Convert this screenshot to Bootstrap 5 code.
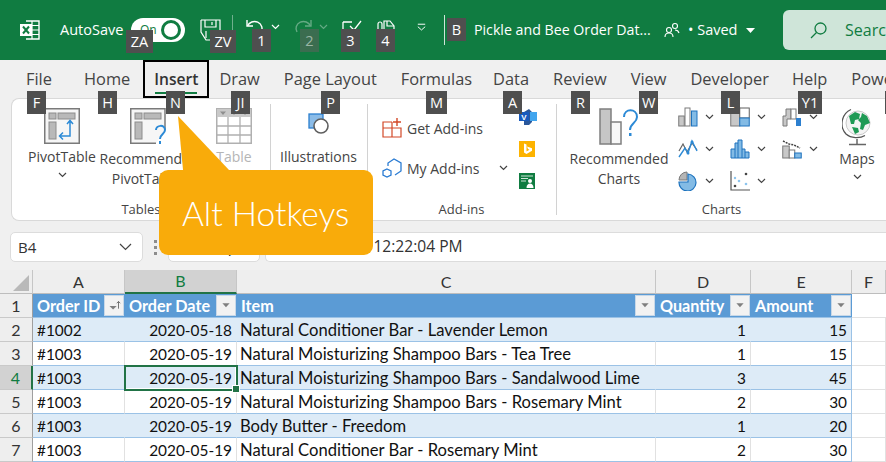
<!DOCTYPE html>
<html lang="en">
<head>
<meta charset="UTF-8">
<title>Pickle and Bee Order Data - Excel</title>
<meta name="viewport" content="width=device-width, initial-scale=1">
<link href="https://cdn.jsdelivr.net/npm/bootstrap@5.3.2/dist/css/bootstrap.min.css" rel="stylesheet">
<style>
    html, body { height: 462px; overflow: hidden; }
    body { background: #f0f0f0; font-family: "Open Sans", "Noto Sans", sans-serif; color: #333; }
    .app-frame { position: relative; width: 886px; height: 462px; overflow: hidden; }

    /* title bar */
    .title-bar { height: 60px; background: #107c41; color: #fff; font-size: 14.5px; white-space: nowrap; overflow: hidden; }
    .title-bar > * { flex: none; }
    .xl-logo { margin-left: 20px; }
    .autosave-label { margin-left: 20px; width: 71px; }
    .toggle-pill { width: 54px; height: 24px; border-radius: 12px; background: #fff; color: #107c41; font-size: 12px; padding-left: 9px; }
    .toggle-knob { width: 20px; height: 20px; border-radius: 50%; border: 3.5px solid #107c41; background: #fff; margin-left: auto; margin-right: 4px; }
    .save-ico { margin-left: 15px; }
    .qa-sep { width: 1px; height: 30px; background: #6fb08d; margin-left: 11px; margin-right: 13px; }
    .qa-sep-2 { margin-left: 18px; margin-right: 29px; background: #cfe5d9; }
    .qa-ico { margin-bottom: 6px; }
    .qa-chev { margin: 0 14px 6px 7px; }
    .redo-ico { opacity: .35; }
    .qa-gap { margin-left: 15px; }
    .qa-more { margin-left: 22px; margin-bottom: 6px; }
    .file-name { width: 190px; font-size: 14.2px; }
    .people-ico { margin-right: 8px; }
    .saved-text { width: 58px; font-size: 14.5px; }
    .search-box { width: 120px; height: 40px; border-radius: 6px; background: #cfe5d9; color: #107c41; margin-left: 28px; padding-left: 27px; font-size: 16px; margin-bottom: 0; }
    .search-box svg { margin-right: 18px; flex: none; }

    /* tabs */
    .tab-row { height: 38px; padding-left: 14px; font-size: 16.4px; white-space: nowrap; }
    .rb-tab { position: relative; height: 38px; padding: 0 12px; line-height: 38px; color: #444; }
    .rb-tab-file { margin-right: 8px; }
    .rb-tab-active { margin: 0 -2px 0 1px; padding: 0 9px; border: 2px solid #000; line-height: 34px; font-weight: 600; font-size: 15.6px; z-index: 2; color: #333; }
    .rb-tab-active::after { content: ""; position: absolute; left: 10px; right: 10px; bottom: 2px; height: 2px; background: #107c41; }
    .rb-tab-snug { margin-right: -3px; }
    .rb-tab-snug-1 { margin-right: -1px; }

    /* ribbon */
    .ribbon-panel { height: 123px; margin-left: 11px; background: #fff; border: 1px solid #d9d9d9; border-right: 0; border-radius: 8px 0 0 8px; font-size: 14px; color: #444; }
    .rb-group { position: relative; height: 100%; flex: none; }
    .rb-group + .rb-group::before { content: ""; position: absolute; left: 0; top: 5px; bottom: 5px; width: 1px; background: #d2d2d2; }
    .rb-tables { width: 258px; padding-left: 15px; }
    .rb-illus { width: 97px; }
    .rb-addins { width: 189px; }
    .rb-charts { width: 331px; }
    .rb-label { position: absolute; left: 0; right: 0; top: 100px; text-align: center; font-size: 13px; line-height: 20px; }
    .rb-big { width: 70px; line-height: 20px; text-align: center; white-space: nowrap; flex: none; }
    .rb-big svg { display: block; margin: 9px auto 3px; }
    .rb-big .rb-caret { margin: 5px auto 0; }
    .rb-rec { width: 104px; margin-right: 0; }
    .rb-table-btn { width: 62px; color: #b5b5b5; margin-left: 2px; }
    .rb-illus .rb-big { width: 100%; padding-top: 5px; }
    .rb-illus .rb-big svg { margin-bottom: 12px; }
    .addin-rows { padding: 19px 0 0 15px; width: 152px; }
    .addin-row { height: 20px; margin-bottom: 20px; white-space: nowrap; gap: 5px; }
    .addin-row .rb-caret { margin-left: 14px; }
    .addin-apps { padding-top: 10px; gap: 16px; }
    .chart-rec { width: 106px; margin-left: 10px; }
    .chart-grid { display: grid; grid-template-columns: repeat(3, 52px); grid-auto-rows: 32px; margin-left: 6px; padding-top: 2px; }
    .chart-cell { gap: 7px; }
    .chart-maps { width: 44px; margin-left: 1px; }

    /* formula row */
    .formula-row { height: 49px; padding: 11px 0 8px 10px; font-size: 15px; }
    .name-box, .fx-box, .formula-box { height: 30px; background: #fff; border: 1px solid #dcdcdc; border-radius: 5px; }
    .name-box { width: 133px; padding: 0 10px 0 7px; }
    .drag-dots { width: 25px; gap: 3px; }
    .drag-dots i { width: 3px; height: 3px; background: #8c8c8c; display: block; }
    .fx-box { width: 92px; margin-right: 5px; padding-right: 18px; font-family: "Liberation Serif", serif; font-style: italic; font-size: 17px; }
    .formula-box { flex: 1; border-radius: 5px 0 0 5px; border-right: 0; padding-left: 22px; color: #333; white-space: nowrap; font-size: 15.6px; }

    /* sheet */
    .xl-sheet { table-layout: fixed; width: 886px; margin: 0; border-collapse: separate; border-spacing: 0; font-family: Lato, "Liberation Sans", sans-serif; font-size: 15.4px; color: #111; }
    .table.xl-sheet > * > tr > * { padding: 0 4px; height: 24px; line-height: 22px; border: 0; border-right: 1px solid #e1e1e1; border-bottom: 1px solid #e1e1e1; background: #fff; color: #111; box-shadow: none; white-space: nowrap; vertical-align: middle; overflow: visible; font-weight: 400; }
    .table.xl-sheet > thead > tr > th { height: 23px; background: #eeeeee; text-align: center; color: #333; border-right-color: #c6c6c6; border-bottom-color: #bdbdbd; font-size: 16px; position: relative; }
    .table.xl-sheet > thead > tr > th.col-on { background: #d2d2d2; color: #107c41; border-bottom: 2px solid #217346; }
    .table.xl-sheet > thead > tr > th.col-corner { padding: 0; }
    .col-corner svg { position: absolute; right: 3px; bottom: 2px; }
    .table.xl-sheet > tbody > tr > th { background: #eeeeee; color: #333; text-align: center; font-size: 16px; border-right-color: #9f9f9f; border-bottom-color: #c9c9c9; padding: 0; }
    .table.xl-sheet > tbody > tr > th.row-on { background: #d2d2d2; color: #107c41; border-right: 2px solid #217346; }
    .table.xl-sheet > tbody > tr.head-row > td { background: #5b9bd5; color: #fff; font-weight: 700; font-size: 16.2px; border-right: 0; border-bottom-color: #9bc2e6; padding-right: 1px; }
    .table.xl-sheet > tbody > tr.band-row > td { background: #ddebf7; border-right-color: #ddebf7; border-bottom-color: #9bc2e6; }
    .table.xl-sheet > tbody > tr.plain-row > td { border-bottom-color: #9bc2e6; }
    .table.xl-sheet > tbody > tr > td.tbl-end { border-right-color: #9bc2e6; }
    .table.xl-sheet > tbody > tr > td.item-cell { font-size: 16.6px; padding-left: 3px; }
    .table.xl-sheet > tbody > tr > td.off-tbl { background: #fff; border-bottom-color: #e1e1e1; border-right-color: #e1e1e1; font-weight: 400; }
    .table.xl-sheet > tbody > tr > td.cell-on { position: relative; outline: 2px solid #217346; outline-offset: -1px; box-shadow: inset 0 0 0 1px #fff; z-index: 1; }
    .cell-on::after { content: ""; position: absolute; right: -4px; bottom: -4px; width: 6px; height: 6px; background: #217346; border: 1px solid #fff; box-sizing: content-box; }
    .filter-btn { width: 20px; height: 21px; background: #f2f2f2; border: 1px solid #c8d8e8; flex: none; }
    .num-cell { text-align: right; }

    /* alt hotkeys */
    .hk { position: absolute; height: 23px; min-width: 19px; padding: 0 3px; background: #4f4f4f; color: #fff; font-size: 14.5px; line-height: 23px; text-align: center; z-index: 5; }
    .hk-za { left: 126px; top: 30px; width: 27px; }
    .hk-zv { left: 210px; top: 30px; width: 26px; }
    .hk-1 { left: 252px; top: 29px; }
    .hk-2 { left: 300px; top: 29px; background: #3b6d50; color: #9ab6a6; }
    .hk-3 { left: 341px; top: 29px; }
    .hk-4 { left: 376px; top: 29px; }
    .hk-b { left: 447px; top: 18px; }
    .hk-f { left: 27px; top: 91px; }
    .hk-h { left: 98px; top: 91px; }
    .hk-n { left: 166px; top: 91px; }
    .hk-ji { left: 231px; top: 91px; }
    .hk-p { left: 321px; top: 91px; }
    .hk-m { left: 426px; top: 91px; width: 21px; }
    .hk-a { left: 503px; top: 91px; }
    .hk-r { left: 571px; top: 91px; }
    .hk-w { left: 639px; top: 91px; }
    .hk-l { left: 721px; top: 91px; }
    .hk-y1 { left: 798px; top: 91px; width: 24px; }
    .hk-end { left: 885px; top: 91px; }

    .callout-tip { position: absolute; left: 170px; top: 112px; z-index: 6; }
    .callout-body { position: absolute; left: 159px; top: 170px; width: 214px; height: 85px; padding-left: 23px; border-radius: 9px; background: #f9ab0a; color: #fff; font-family: Lato, sans-serif; font-weight: 300; font-size: 33.5px; line-height: 87px; z-index: 6; white-space: nowrap; }
</style>
</head>
<body>
<svg class="d-none" xmlns="http://www.w3.org/2000/svg">
    <symbol id="caret" viewBox="0 0 9 6"><path d="M1 1l3.5 3.5L8 1" fill="none" stroke="#444" stroke-width="1.2"/></symbol>
    <symbol id="caret-w" viewBox="0 0 9 6"><path d="M1 1l3.5 3.5L8 1" fill="none" stroke="#fff" stroke-width="1.2"/></symbol>
    <symbol id="filter" viewBox="0 0 20 21"><path d="M6 8h8l-4 4.5z" fill="#7f7f7f"/></symbol>
</svg>
<div class="app-frame">

    <!-- title bar -->
    <div class="title-bar d-flex align-items-center">
        <svg class="xl-logo" width="20" height="20" viewBox="0 0 20 20">
            <path d="M6 1h13v18H6" fill="none" stroke="#fff" stroke-width="1.4"/>
            <path d="M12 1v18M12 5.5h7M12 10h7M12 14.5h7" stroke="#fff" stroke-width="1.2"/>
            <rect x="0" y="4" width="12" height="12" fill="#fff"/>
            <path d="M3 6.5l6 7M9 6.5l-6 7" stroke="#107c41" stroke-width="2"/>
        </svg>
        <span class="autosave-label">AutoSave</span>
        <div class="toggle-pill d-flex align-items-center"><span>On</span><span class="toggle-knob"></span></div>
        <svg class="save-ico" width="21" height="24" viewBox="0 0 21 24" fill="none" stroke="#fff" stroke-width="1.2">
            <path d="M1 2h19v11M1 2v12l5 8h5"/><path d="M5 2v7h11V2M12 4v3"/><path d="M6 13v7"/>
        </svg>
        <span class="qa-sep"></span>
        <svg class="qa-ico" width="18" height="18" viewBox="0 0 18 18" fill="none" stroke="#fff" stroke-width="1.4"><path d="M1 2v6h6"/><path d="M1.5 8A7.5 7 0 1 1 15 14"/></svg>
        <svg class="qa-chev" width="9" height="6"><use href="#caret-w"/></svg>
        <svg class="qa-ico redo-ico" width="18" height="18" viewBox="0 0 18 18" fill="none" stroke="#fff" stroke-width="1.4"><path d="M17 2v6h-6"/><path d="M16.5 8A7.5 7 0 1 0 3 14"/></svg>
        <svg class="qa-chev redo-ico" width="9" height="6"><use href="#caret-w"/></svg>
        <svg class="qa-ico" width="20" height="14" viewBox="0 0 20 14" fill="none" stroke="#fff" stroke-width="1.3"><path d="M1 2h9M1 2v11h13V9"/><path d="M8 6l4 4 7-9"/></svg>
        <svg class="qa-ico qa-gap" width="18" height="16" viewBox="0 0 18 16" fill="none" stroke="#fff" stroke-width="1.2"><rect x="1" y="3" width="4" height="11" rx="2"/><path d="M7 2h6l4 5v7H7z"/><path d="M10 2v5h7"/></svg>
        <svg class="qa-more" width="9" height="9" viewBox="0 0 11 10" fill="none" stroke="#fff" stroke-width="1.2"><path d="M1 1h9"/><path d="M1 4l4.5 4L10 4"/></svg>
        <span class="qa-sep qa-sep-2"></span>
        <span class="file-name">Pickle and Bee Order Dat...</span>
        <svg class="people-ico" width="16" height="16" viewBox="0 0 16 16" fill="none" stroke="#fff" stroke-width="1.1"><circle cx="11" cy="4" r="2.5"/><circle cx="5" cy="8" r="2.5"/><path d="M1 15c0-3 2-4 4-4s4 1 4 4M11 8c2 0 3.500 1 4 3"/></svg>
        <span class="saved-text">&bull; Saved</span>
        <svg width="9" height="5" viewBox="0 0 9 5"><path d="M0 0h9L4.500 5z" fill="#fff"/></svg>
        <div class="search-box d-flex align-items-center">
            <svg width="17" height="17" viewBox="0 0 17 17" fill="none" stroke="#107c41" stroke-width="1.3"><circle cx="10.500" cy="6.500" r="5.500"/><path d="M6.500 10.500L1 16"/></svg>
            <span>Search</span>
        </div>
    </div>

    <!-- ribbon tabs -->
    <div class="tab-row d-flex">
        <div class="rb-tab rb-tab-file">File</div>
        <div class="rb-tab">Home</div>
        <div class="rb-tab rb-tab-active">Insert</div>
        <div class="rb-tab">Draw</div>
        <div class="rb-tab">Page Layout</div>
        <div class="rb-tab rb-tab-snug">Formulas</div>
        <div class="rb-tab">Data</div>
        <div class="rb-tab">Review</div>
        <div class="rb-tab">View</div>
        <div class="rb-tab rb-tab-snug-1">Developer</div>
        <div class="rb-tab">Help</div>
        <div class="rb-tab">Power Pivot</div>
    </div>

    <!-- ribbon -->
    <div class="ribbon-panel d-flex overflow-hidden">
        <div class="rb-group rb-tables d-flex">
            <div class="rb-big">
                <svg width="36" height="36" viewBox="0 0 36 36">
                    <rect x=".75" y=".75" width="34.500" height="34.500" fill="#f6f6f6" stroke="#7a7a7a" stroke-width="1.500"/>
                    <rect x="5" y="5" width="7" height="6" fill="#b9b9b9" stroke="#8c8c8c"/><rect x="14" y="5" width="17" height="6" fill="#b9b9b9" stroke="#8c8c8c"/><rect x="5" y="14" width="7" height="17" fill="#b9b9b9" stroke="#8c8c8c"/>
                    <path d="M26 13v15H16M23 16l3-3.500 3 3.500M19 24.500L15.500 28l3.500 3.500" fill="none" stroke="#2c8ad6" stroke-width="1.500"/>
                </svg>
                PivotTable
                <svg class="rb-caret" width="9" height="6"><use href="#caret"/></svg>
            </div>
            <div class="rb-big rb-rec">
                <svg width="38" height="38" viewBox="0 0 38 38">
                    <path d="M35 22V.75H.75v34.500H26" fill="#f6f6f6" stroke="#7a7a7a" stroke-width="1.500"/>
                    <rect x="5" y="5" width="7" height="6" fill="#b9b9b9" stroke="#8c8c8c"/><rect x="14" y="5" width="17" height="6" fill="#b9b9b9" stroke="#8c8c8c"/><rect x="5" y="14" width="7" height="17" fill="#b9b9b9" stroke="#8c8c8c"/>
                    <path d="M26 22c0-5 9-6 9 0 0 4-5 4-5 9" fill="none" stroke="#2c8ad6" stroke-width="2"/><rect x="29" y="33" width="2" height="3" fill="#2c8ad6"/>
                </svg>
                Recommended<br>PivotTables
            </div>
            <div class="rb-big rb-table-btn">
                <svg width="36" height="36" viewBox="0 0 36 36">
                    <rect x=".75" y=".75" width="34.500" height="34.500" fill="#fff" stroke="#b0b0b0" stroke-width="1.500"/>
                    <rect x="1" y="1" width="34" height="8" fill="#c9c9c9"/>
                    <path d="M1 18h34M1 27h34M12 9v26M24 9v26" stroke="#b0b0b0" stroke-width="1.300"/>
                    <path d="M4 3.500h6l-3 3.500zM15 3.500h6l-3 3.500zM26 3.500h6l-3 3.500z" fill="#8f8f8f"/>
                </svg>
                Table
            </div>
            <div class="rb-label">Tables</div>
        </div>
        <div class="rb-group rb-illus">
            <div class="rb-big">
                <svg width="22" height="22" viewBox="0 0 22 22">
                    <rect x="1" y="1" width="14" height="14" fill="#8bbce8" stroke="#2c7fcf" stroke-width="1.300"/>
                    <circle cx="13" cy="13" r="7" fill="#fff" stroke="#5f5f5f" stroke-width="1.600"/>
                </svg>
                Illustrations
            </div>
        </div>
        <div class="rb-group rb-addins d-flex">
            <div class="addin-rows">
                <div class="addin-row d-flex align-items-center">
                    <svg width="20" height="20" viewBox="0 0 20 20" fill="none" stroke="#d24726" stroke-width="1.200"><path d="M10 4H1v15h18v-9H1M10 4v15"/><path d="M15 0v8M11 4h8" stroke-width="1.400"/></svg>
                    <span>Get Add-ins</span>
                </div>
                <div class="addin-row d-flex align-items-center">
                    <svg width="20" height="20" viewBox="0 0 20 20" fill="none" stroke="#2b7cd3" stroke-width="1.300"><path d="M6 8V5l6-4 7 4v8l-6 4"/><path d="M5 11l4 2v4l-4 2-4-2v-4z"/></svg>
                    <span>My Add-ins</span>
                    <svg class="rb-caret" width="9" height="6"><use href="#caret"/></svg>
                </div>
            </div>
            <div class="addin-apps d-flex flex-column">
                <svg width="18" height="16" viewBox="0 0 18 16"><path d="M5 3l5-3 3 3h5v9h-5v1l-3 3H5z" fill="#2b579a"/><path d="M11 3h7v9h-7z" fill="#41a5ee"/><rect x="0" y="3" width="10" height="9" fill="#185abd"/><text x="5" y="10.500" font-size="8" font-weight="700" fill="#fff" text-anchor="middle" font-family="Liberation Sans, sans-serif">V</text></svg>
                <svg width="16" height="16" viewBox="0 0 16 16"><rect width="16" height="16" fill="#fdb300"/><path d="M5 2.500l2.500 1v7l3-1.800-1.500-.8-1-2.500 5 1.800v2.600L7.500 13 5 11.500z" fill="#fff"/></svg>
                <svg width="16" height="16" viewBox="0 0 16 16"><rect width="16" height="16" fill="#107c41"/><path d="M2 3h12M2 5.500h7M2 8h5" stroke="#cfe5d9"/><circle cx="11" cy="8" r="2" fill="#fff"/><path d="M7.500 15c0-3 1.500-4.500 3.500-4.500s3.500 1.500 3.500 4.500z" fill="#fff"/></svg>
            </div>
            <div class="rb-label">Add-ins</div>
        </div>
        <div class="rb-group rb-charts d-flex">
            <div class="rb-big chart-rec">
                <svg width="40" height="38" viewBox="0 0 40 38">
                    <rect x="1" y="1" width="11" height="35" fill="#c6c6c6" stroke="#7f7f7f" stroke-width="1.500"/>
                    <rect x="12" y="14" width="10" height="22" fill="#f7f7f7" stroke="#7f7f7f" stroke-width="1.500"/>
                    <path d="M25 9c0-9 13-9 13 0 0 6-7 6-7 13" fill="none" stroke="#2c8ad6" stroke-width="2"/><rect x="30" y="25" width="2.500" height="3" fill="#2c8ad6"/>
                </svg>
                Recommended<br>Charts
            </div>
            <div class="chart-grid">
                <div class="chart-cell d-flex align-items-center">
                    <svg width="20" height="20" viewBox="0 0 20 20"><rect x=".75" y="9" width="5.500" height="10" fill="#c8c8c8" stroke="#7a7a7a"/><rect x="7" y="1" width="5" height="18" fill="#fff" stroke="#7a7a7a"/><rect x="13.500" y="4" width="5.500" height="15" fill="#83bbe5" stroke="#1e73be"/></svg>
                    <svg width="9" height="6"><use href="#caret"/></svg>
                </div>
                <div class="chart-cell d-flex align-items-center">
                    <svg width="20" height="20" viewBox="0 0 20 20"><rect x=".75" y="1" width="9" height="18" fill="#c8c8c8" stroke="#7a7a7a"/><rect x="9.750" y="1" width="9.500" height="10" fill="#fff" stroke="#5f5f5f"/><rect x="9.750" y="11" width="9.500" height="8" fill="#83bbe5" stroke="#1e73be"/></svg>
                    <svg width="9" height="6"><use href="#caret"/></svg>
                </div>
                <div class="chart-cell d-flex align-items-center">
                    <svg width="20" height="20" viewBox="0 0 20 20"><path d="M1 19V9h3V2h5v10H5v7z" fill="#c8c8c8" stroke="#7a7a7a"/><rect x="9" y="2" width="5" height="10" fill="#fff" stroke="#7a7a7a"/><rect x="14" y="11" width="5" height="8" fill="#2c7fcf"/></svg>
                    <svg width="9" height="6"><use href="#caret"/></svg>
                </div>
                <div class="chart-cell d-flex align-items-center">
                    <svg width="20" height="20" viewBox="0 0 20 20" fill="none"><path d="M1 12l4-7 4 8 5-9 5 7" stroke="#666" stroke-width="1.200"/><path d="M1 18l6-9 3 5 4-12 5 10" stroke="#2c8ad6" stroke-width="1.400"/><circle cx="14" cy="3" r="1.500" fill="#2c8ad6"/><circle cx="10" cy="14" r="1.500" fill="#2c8ad6"/></svg>
                    <svg width="9" height="6"><use href="#caret"/></svg>
                </div>
                <div class="chart-cell d-flex align-items-center">
                    <svg width="20" height="20" viewBox="0 0 20 20"><path d="M1 19V10h4V4h3V1h4v9h3v3h4v6z" fill="#83bbe5" stroke="#1e73be"/><path d="M5 10v9M8 4v15M12 10v9M15 13v6" stroke="#1e73be"/></svg>
                    <svg width="9" height="6"><use href="#caret"/></svg>
                </div>
                <div class="chart-cell d-flex align-items-center">
                    <svg width="20" height="20" viewBox="0 0 20 20"><rect x=".75" y="7" width="6.500" height="12" fill="#c8c8c8" stroke="#7a7a7a"/><rect x="7.250" y="11" width="5.500" height="8" fill="#fff" stroke="#7a7a7a"/><rect x="12.750" y="14" width="6.500" height="5" fill="#83bbe5" stroke="#1e73be"/><path d="M1 2l6 3 5 1 6 3" stroke="#444" stroke-width="1.500" stroke-dasharray="2 1" fill="none"/></svg>
                    <svg width="9" height="6"><use href="#caret"/></svg>
                </div>
                <div class="chart-cell d-flex align-items-center">
                    <svg width="20" height="20" viewBox="0 0 20 20"><path d="M1 9A8 8 0 0 1 9 1v8z" fill="#b5b5b5" stroke="#7a7a7a"/><path d="M10 3a8.500 8.500 0 1 1-9 8h9z" fill="#83bbe5" stroke="#1e73be" stroke-width="1.200"/></svg>
                    <svg width="9" height="6"><use href="#caret"/></svg>
                </div>
                <div class="chart-cell d-flex align-items-center">
                    <svg width="20" height="20" viewBox="0 0 20 20"><path d="M1 0v19h19" fill="none" stroke="#555" stroke-width="1.200"/><circle cx="5" cy="15" r="1.300" fill="#444"/><circle cx="16" cy="3" r="1.300" fill="#444"/><circle cx="9" cy="10" r="1.300" fill="#8cc4ee"/><circle cx="5" cy="7" r="1.200" fill="#8cc4ee"/><circle cx="16" cy="13" r="1.300" fill="#8cc4ee"/></svg>
                    <svg width="9" height="6"><use href="#caret"/></svg>
                </div>
            </div>
            <div class="rb-big chart-maps">
                <svg width="30" height="38" viewBox="0 0 30 38">
                    <circle cx="16" cy="15" r="12" fill="#f4f4f4" stroke="#c9c9c9"/>
                    <path d="M7 8l6-4 5 2-1 5-4 1-1 4-3 0zM20 5l5 3 3 7-5 2-2 5-3-1 1-6-3-3 3-3zM10 19l6 1 1 4-4 2z" fill="#1f9a55"/>
                    <path d="M9 1.500A15.500 15.500 0 0 0 4 26c5 4.500 14 4.500 19 1.500" fill="none" stroke="#555" stroke-width="1.300"/>
                    <path d="M15 31v5M7 36.500h17" stroke="#666" stroke-width="1.500"/>
                </svg>
                Maps
                <svg class="rb-caret" width="9" height="6"><use href="#caret"/></svg>
            </div>
            <div class="rb-label">Charts</div>
        </div>
    </div>

    <!-- formula bar -->
    <div class="formula-row d-flex">
        <div class="name-box d-flex align-items-center justify-content-between">
            <span>B4</span>
            <svg width="13" height="8" viewBox="0 0 13 8"><path d="M1 1l5.500 5.500L12 1" fill="none" stroke="#444" stroke-width="1.200"/></svg>
        </div>
        <div class="drag-dots d-flex flex-column align-items-center justify-content-center"><i></i><i></i><i></i></div>
        <div class="fx-box d-flex align-items-center justify-content-end">fx</div>
        <div class="formula-box d-flex align-items-center">2020-05-19 12:22:04 PM</div>
    </div>

    <!-- sheet -->
    <table class="table xl-sheet">
        <colgroup>
            <col style="width:33px"><col style="width:92px"><col style="width:112px"><col style="width:419px"><col style="width:95px"><col style="width:101px"><col style="width:34px">
        </colgroup>
        <thead>
            <tr>
                <th class="col-corner"><svg width="16" height="16" viewBox="0 0 16 16"><path d="M16 0v16H0z" fill="#b9b9b9"/></svg></th>
                <th>A</th><th class="col-on">B</th><th>C</th><th>D</th><th>E</th><th>F</th>
            </tr>
        </thead>
        <tbody>
            <tr class="head-row">
                <th>1</th>
                <td><div class="d-flex align-items-center justify-content-between">Order ID<svg class="filter-btn" viewBox="0 0 20 21"><path d="M5 11h8l-4 4z" fill="#7f7f7f"/><path d="M15 14V6M13 8l2-2 2 2" fill="none" stroke="#666"/></svg></div></td>
                <td><div class="d-flex align-items-center justify-content-between">Order Date<svg class="filter-btn"><use href="#filter"/></svg></div></td>
                <td><div class="d-flex align-items-center justify-content-between">Item<svg class="filter-btn"><use href="#filter"/></svg></div></td>
                <td><div class="d-flex align-items-center justify-content-between">Quantity<svg class="filter-btn"><use href="#filter"/></svg></div></td>
                <td><div class="d-flex align-items-center justify-content-between">Amount<svg class="filter-btn"><use href="#filter"/></svg></div></td>
                <td class="off-tbl"></td>
            </tr>
            <tr class="band-row"><th>2</th><td>#1002</td><td class="num-cell">2020-05-18</td><td class="item-cell">Natural Conditioner Bar - Lavender Lemon</td><td class="num-cell">1</td><td class="num-cell tbl-end">15</td><td class="off-tbl"></td></tr>
            <tr class="plain-row"><th>3</th><td>#1003</td><td class="num-cell">2020-05-19</td><td class="item-cell">Natural Moisturizing Shampoo Bars - Tea Tree</td><td class="num-cell">1</td><td class="num-cell tbl-end">15</td><td class="off-tbl"></td></tr>
            <tr class="band-row"><th class="row-on">4</th><td>#1003</td><td class="num-cell cell-on">2020-05-19</td><td class="item-cell">Natural Moisturizing Shampoo Bars - Sandalwood Lime</td><td class="num-cell">3</td><td class="num-cell tbl-end">45</td><td class="off-tbl"></td></tr>
            <tr class="plain-row"><th>5</th><td>#1003</td><td class="num-cell">2020-05-19</td><td class="item-cell">Natural Moisturizing Shampoo Bars - Rosemary Mint</td><td class="num-cell">2</td><td class="num-cell tbl-end">30</td><td class="off-tbl"></td></tr>
            <tr class="band-row"><th>6</th><td>#1003</td><td class="num-cell">2020-05-19</td><td class="item-cell">Body Butter - Freedom</td><td class="num-cell">1</td><td class="num-cell tbl-end">20</td><td class="off-tbl"></td></tr>
            <tr class="plain-row"><th>7</th><td>#1003</td><td class="num-cell">2020-05-19</td><td class="item-cell">Natural Conditioner Bar - Rosemary Mint</td><td class="num-cell">2</td><td class="num-cell tbl-end">30</td><td class="off-tbl"></td></tr>
        </tbody>
    </table>

    <!-- alt key tips -->
    <span class="hk hk-za">ZA</span><span class="hk hk-zv">ZV</span><span class="hk hk-1">1</span><span class="hk hk-2">2</span><span class="hk hk-3">3</span><span class="hk hk-4">4</span><span class="hk hk-b">B</span>
    <span class="hk hk-f">F</span><span class="hk hk-h">H</span><span class="hk hk-n">N</span><span class="hk hk-ji">JI</span><span class="hk hk-p">P</span><span class="hk hk-m">M</span><span class="hk hk-a">A</span><span class="hk hk-r">R</span><span class="hk hk-w">W</span><span class="hk hk-l">L</span><span class="hk hk-y1">Y1</span><span class="hk hk-end"></span>

    <svg class="callout-tip" width="64" height="60" viewBox="0 0 64 60"><path d="M8 4l5 54h46z" fill="#f9ab0a"/></svg>
    <div class="callout-body">Alt Hotkeys</div>
</div>
</body>
</html>
